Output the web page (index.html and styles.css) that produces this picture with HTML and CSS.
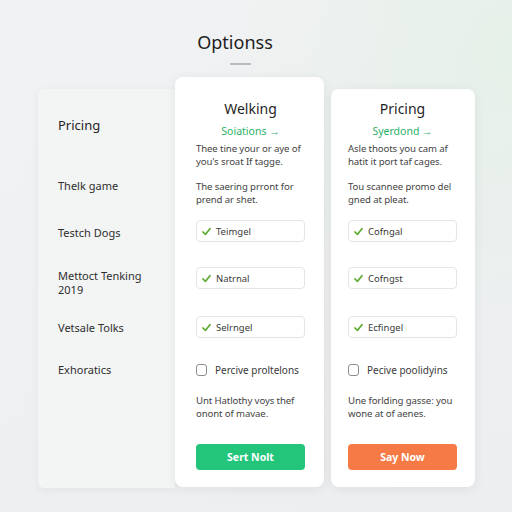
FILE: index.html
```html
<!DOCTYPE html>
<html>
<head>
<meta charset="utf-8">
<link rel="stylesheet" href="styles.css">
</head>
<body>
<div class="page">
  <h1 class="title">Optionss</h1>
  <div class="rule"></div>
  <div class="stage">
    <div class="labels">
      <div class="lab-head">Pricing</div>
      <div class="lab l1">Thelk game</div>
      <div class="lab l2">Testch Dogs</div>
      <div class="lab l3">Mettoct Tenking<br>2019</div>
      <div class="lab l4">Vetsale Tolks</div>
      <div class="lab l5">Exhoratics</div>
    </div>
    <div class="card card-mid">
      <div class="c-title">Welking</div>
      <div class="c-link">Soiations &rarr;</div>
      <p class="c-p p1">Thee tine your or aye of<br>you's sroat If tagge.</p>
      <p class="c-p p2">The saering prront for<br>prend ar shet.</p>
      <div class="field f1"><svg class="chk" viewBox="0 0 10 10"><path d="M1 5.5 L3.8 8.2 L9 1.8"/></svg><span>Teimgel</span></div>
      <div class="field f2"><svg class="chk" viewBox="0 0 10 10"><path d="M1 5.5 L3.8 8.2 L9 1.8"/></svg><span>Natrnal</span></div>
      <div class="field f3"><svg class="chk" viewBox="0 0 10 10"><path d="M1 5.5 L3.8 8.2 L9 1.8"/></svg><span>Selrngel</span></div>
      <label class="opt"><span class="box"></span><span>Percive proltelons</span></label>
      <p class="c-p p3">Unt Hatlothy voys thef<br>onont of mavae.</p>
      <button class="btn btn-green">Sert Nolt</button>
    </div>
    <div class="card card-right">
      <div class="c-title">Pricing</div>
      <div class="c-link">Syerdond &rarr;</div>
      <p class="c-p p1">Asle thoots you cam af<br>hatit it port taf cages.</p>
      <p class="c-p p2">Tou scannee promo del<br>gned at pleat.</p>
      <div class="field f1"><svg class="chk" viewBox="0 0 10 10"><path d="M1 5.5 L3.8 8.2 L9 1.8"/></svg><span>Cofngal</span></div>
      <div class="field f2"><svg class="chk" viewBox="0 0 10 10"><path d="M1 5.5 L3.8 8.2 L9 1.8"/></svg><span>Cofngst</span></div>
      <div class="field f3"><svg class="chk" viewBox="0 0 10 10"><path d="M1 5.5 L3.8 8.2 L9 1.8"/></svg><span>Ecfingel</span></div>
      <label class="opt"><span class="box"></span><span>Pecive poolidyins</span></label>
      <p class="c-p p3">Une forlding gasse: you<br>wone at of aenes.</p>
      <button class="btn btn-orange">Say Now</button>
    </div>
  </div>
</div>
</body>
</html>
```

FILE: styles.css
```css
* { box-sizing: border-box; }
html, body { margin: 0; padding: 0; }
body {
  width: 512px;
  height: 512px;
  overflow: hidden;
  font-family: "Noto Sans", "Open Sans", sans-serif;
  color: #333;
  background: linear-gradient(160deg, #f1f2f3 0%, #eef0f1 55%, #eceeef 100%);
}
.page {
  height: 512px;
  background: radial-gradient(circle at 100% 10%, rgba(225, 240, 228, 0.7), rgba(238, 240, 241, 0) 40%);
}
.title {
  margin: 0;
  padding-top: 30px;
  padding-right: 42px;
  text-align: center;
  font-size: 18px;
  font-weight: 400;
  line-height: 24px;
  color: #1e1e1e;
}
.rule {
  width: 21px;
  height: 2px;
  background: #b9bcbe;
  margin: 9px auto 0;
  position: relative;
  left: -16px;
}
.stage {
  display: flex;
  align-items: flex-start;
  padding-left: 38px;
  margin-top: 12px;
}
.labels {
  width: 137px;
  height: 399px;
  margin-top: 12px;
  background: #f3f4f4;
  border-radius: 6px 0 0 6px;
  box-shadow: 0 2px 10px rgba(0, 0, 0, 0.05);
  padding: 28px 0 0 20px;
}
.lab-head {
  font-size: 13px;
  line-height: 16px;
  color: #262626;
}
.lab {
  font-size: 11px;
  line-height: 14px;
  color: #2e2e2e;
}
.l1 { margin-top: 46px; }
.l2 { margin-top: 33px; }
.l3 { margin-top: 29px; }
.l4 { margin-top: 24px; }
.l5 { margin-top: 28px; }

.card {
  background: #ffffff;
  border-radius: 8px;
  box-shadow: 0 2px 12px rgba(0, 0, 0, 0.07);
  display: flex;
  flex-direction: column;
  flex-shrink: 0;
}
.card-mid {
  width: 149px;
  height: 410px;
  padding: 23px 19px 0 21px;
  position: relative;
  z-index: 1;
}
.card-right {
  width: 144px;
  height: 398px;
  margin-top: 12px;
  margin-left: 7px;
  padding: 11px 18px 0 17px;
}
.c-title {
  text-align: center;
  font-size: 14px;
  line-height: 18px;
  color: #1f1f1f;
}
.c-link {
  text-align: center;
  margin-top: 6px;
  font-size: 10.5px;
  line-height: 14px;
  color: #2bb067;
}
.c-p {
  margin: 0;
  font-size: 9.6px;
  line-height: 12.5px;
  color: #444;
  white-space: nowrap;
  letter-spacing: -0.1px;
}
.p1 { margin-top: 5px; }
.p2 { margin-top: 13px; }
.p3 { margin-top: 18px; }
.field {
  height: 22px;
  flex-shrink: 0;
  border: 1px solid #e2e4e6;
  border-radius: 4px;
  display: flex;
  align-items: center;
  padding-left: 5px;
  font-size: 9.5px;
  color: #3a3a3a;
  gap: 5px;
}
.f1 { margin-top: 14px; }
.f2 { margin-top: 25px; }
.f3 { margin-top: 27px; }
.chk {
  width: 9px;
  height: 9px;
  fill: none;
  stroke: #62ad36;
  stroke-width: 1.8;
  stroke-linecap: round;
  stroke-linejoin: round;
}
.opt {
  margin-top: 25px;
  display: flex;
  align-items: center;
  gap: 8px;
  font-size: 10px;
  line-height: 14px;
  color: #3a3a3a;
  white-space: nowrap;
}
.box {
  width: 11px;
  height: 12px;
  flex-shrink: 0;
  border: 1px solid #8a8d90;
  border-radius: 3px;
}
.btn {
  margin-top: 24px;
  height: 26px;
  flex-shrink: 0;
  border: none;
  border-radius: 4px;
  color: #fff;
  font-family: "Noto Sans", "Open Sans", sans-serif;
  font-weight: 700;
  font-size: 10.5px;
  width: 100%;
}
.btn-green { background: #22c57a; }
.btn-orange { background: #f67a46; }
```
